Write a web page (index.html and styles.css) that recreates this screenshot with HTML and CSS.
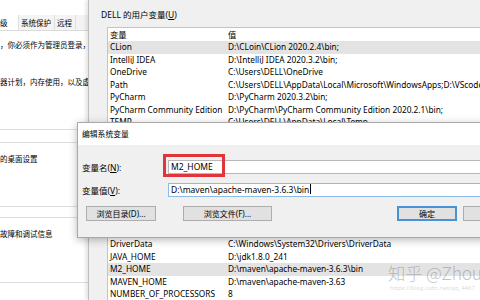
FILE: index.html
```html
<!DOCTYPE html>
<html lang="zh-CN">
<head>
    <meta charset="UTF-8">
    <title>编辑系统变量</title>
    <link rel="stylesheet" href="styles.css">
</head>
<body>
    <div class="win sysprops">
        <div class="tabs">
            <span class="tab on">级</span><span class="tab">系统保护</span><span class="tab">远程</span>
        </div>
        <div class="group g1">
            <p class="l1">，你必须作为管理员登录，</p>
            <p class="l2">器计划，内存使用，以及虚</p>
        </div>
        <div class="group g2"><p>的桌面设置</p></div>
        <div class="group g3"><p>故障和调试信息</p></div>
    </div>

    <div class="win envvars">
        <div class="cap">DELL 的用户变量(<u>U</u>)</div>
        <div class="list user">
            <div class="row head"><span>变量</span><span>值</span></div>
            <div class="row sel"><span>CLion</span><span>D:\CLoin\CLion 2020.2.4\bin;</span></div>
            <div class="row"><span>IntelliJ IDEA</span><span>D:\IntelliJ IDEA 2020.3.2\bin;</span></div>
            <div class="row"><span>OneDrive</span><span>C:\Users\DELL\OneDrive</span></div>
            <div class="row"><span>Path</span><span>C:\Users\DELL\AppData\Local\Microsoft\WindowsApps;D:\VScode\bin</span></div>
            <div class="row"><span>PyCharm</span><span>D:\PyCharm 2020.3.2\bin;</span></div>
            <div class="row"><span>PyCharm Community Edition</span><span>D:\PyCharm\PyCharm Community Edition 2020.2.1\bin;</span></div>
            <div class="row"><span>TEMP</span><span>C:\Users\DELL\AppData\Local\Temp</span></div>
        </div>
        <div class="list system">
            <div class="row head"><span>变量</span><span>值</span></div>
            <div class="row"><span>ComSpec</span><span>C:\Windows\system32\cmd.exe</span></div>
            <div class="row"><span>configsetroot</span><span>C:\Windows\ConfigSetRoot</span></div>
            <div class="row"><span>DriverData</span><span>C:\Windows\System32\Drivers\DriverData</span></div>
            <div class="row"><span>JAVA_HOME</span><span>D:\jdk1.8.0_241</span></div>
            <div class="row sel"><span>M2_HOME</span><span>D:\maven\apache-maven-3.6.3\bin</span></div>
            <div class="row"><span>MAVEN_HOME</span><span>D:\maven\apache-maven-3.63</span></div>
            <div class="row"><span>NUMBER_OF_PROCESSORS</span><span>8</span></div>
        </div>
    </div>

    <div class="win edit">
        <div class="title">编辑系统变量</div>
        <div class="body">
            <div class="field">
                <label>变量名(<u>N</u>):</label>
                <div class="input marked">M2_HOME</div>
            </div>
            <div class="field">
                <label>变量值(<u>V</u>):</label>
                <div class="input focus">D:\maven\apache-maven-3.6.3\bin<i class="caret"></i></div>
            </div>
            <div class="buttons">
                <span class="btn b-dir">浏览目录(D)...</span>
                <span class="btn b-file">浏览文件(F)...</span>
                <span class="btn b-ok">确定</span>
                <span class="btn b-cancel">取消</span>
            </div>
        </div>
    </div>

    <div class="watermark">
        <div class="wm-big">知乎 @Zhou</div>
        <div class="wm-small">https://blog.csdn.net/qq_4467</div>
    </div>
</body>
</html>
```

FILE: styles.css
```css
body{
    margin:0;
    width:480px;
    height:300px;
    overflow:hidden;
    position:relative;
    background:#fff;
    color:#000;
    font-family:"Noto Sans","Noto Sans CJK SC",sans-serif;
}
p{
    margin:0;
}
u{
    text-decoration:underline;
    text-underline-offset:1px;
}

/* windows on the desktop */
.win{
    position:absolute;
    box-sizing:border-box;
}

/* system properties, behind everything */
.sysprops{
    left:0;
    top:0;
    width:89px;
    height:300px;
    background:#fff;
    font-size:7.5px;
    font-family:"Noto Sans CJK SC",sans-serif;
}
.tabs{
    margin-top:15px;
    height:16px;
    display:flex;
    background:#f4f4f4;
    border-bottom:1px solid #dadada;
    box-sizing:border-box;
}
.tab{
    line-height:15px;
    padding:0 3px 0 2px;
    border-right:1px solid #e0e0e0;
    white-space:nowrap;
}
.tab.on{
    background:#fff;
    width:15px;
    padding-left:0;
}
.group{
    box-sizing:border-box;
    white-space:nowrap;
}
.g1{
    height:99px;
    padding-top:9px;
    border-bottom:1px solid #dedede;
}
.g1 p{
    line-height:10px;
}
.g1 .l2{
    margin-top:27px;
}
.g2{
    margin-top:12px;
    height:65px;
    border-top:1px solid #dedede;
    border-bottom:1px solid #dedede;
    padding-top:10px;
}
.g3{
    margin-top:10px;
    height:66px;
    border-top:1px solid #dedede;
    border-bottom:1px solid #dedede;
    padding-top:10px;
}

/* environment variables */
.envvars{
    left:88px;
    top:0;
    width:430px;
    height:300px;
    background:#f0f0f0;
    border-left:1px solid #bdbdbd;
    box-shadow:-2px 0 4px rgba(0,0,0,.12);
    padding:9px 0 0 12px;
    font-size:8.3px;
}
.cap{
    line-height:12px;
    font-size:8.5px;
}
.list{
    margin:6px 0 0 6px;
    background:#fff;
    border:1px solid #c4c4c4;
    box-sizing:border-box;
    overflow:hidden;
}
.list.user{
    height:100px;
}
.list.system{
    margin-top:72px;
    height:120px;
}
.row{
    display:grid;
    grid-template-columns:118px 1fr;
    padding-left:2px;
    line-height:12.5px;
    white-space:nowrap;
}
.row.head{
    line-height:13px;
}
.row.sel{
    background:#e3e3e3;
}

/* edit dialog on top */
.edit{
    left:77px;
    top:122px;
    width:455px;
    height:116px;
    background:#f0f0f0;
    border:1px solid #a9a9a9;
    box-shadow:0 2px 8px rgba(0,0,0,.28);
    font-size:8.5px;
}
.title{
    height:22px;
    line-height:22px;
    background:#fff;
    padding-left:4px;
    font-size:7.8px;
}
.body{
    padding:15px 8px 0 4px;
}
.field{
    display:grid;
    grid-template-columns:86px 1fr;
    align-items:center;
    margin-bottom:9px;
}
.input{
    position:relative;
    height:14px;
    line-height:12px;
    box-sizing:border-box;
    border:1px solid #b8b8b8;
    background:#fff;
    padding-left:2px;
    white-space:nowrap;
}
.input.focus{
    border-color:#8cbbe6;
}
.input.marked::before{
    content:"";
    position:absolute;
    left:-6px;
    top:-7px;
    width:62px;
    height:23px;
    border:3px solid #e0353a;
    box-sizing:border-box;
}
.caret{
    display:inline-block;
    width:1px;
    height:10px;
    background:#000;
    vertical-align:-1px;
    margin-left:1px;
}
.buttons{
    display:flex;
    margin-top:4px;
    padding-left:4px;
}
.btn{
    height:15px;
    line-height:13px;
    box-sizing:border-box;
    border:1px solid #adadad;
    background:#e1e1e1;
    text-align:center;
    font-size:8px;
    white-space:nowrap;
}
.b-dir{
    width:70px;
}
.b-file{
    width:89px;
    margin-left:27px;
}
.b-ok{
    width:60px;
    margin-left:auto;
    border:2px solid #4a92d8;
    line-height:11px;
}
.b-cancel{
    width:60px;
    margin-left:6px;
}

/* watermark over everything */
.watermark{
    position:absolute;
    left:388px;
    top:262px;
    white-space:nowrap;
}
.wm-big{
    font-size:17.5px;
    line-height:22px;
    font-weight:300;
    letter-spacing:-.3px;
    color:rgba(140,140,140,.55);
    font-family:"Noto Sans CJK SC",sans-serif;
}
.wm-small{
    font-size:6px;
    line-height:8px;
    color:rgba(170,170,170,.45);
    padding-left:2px;
}
```
